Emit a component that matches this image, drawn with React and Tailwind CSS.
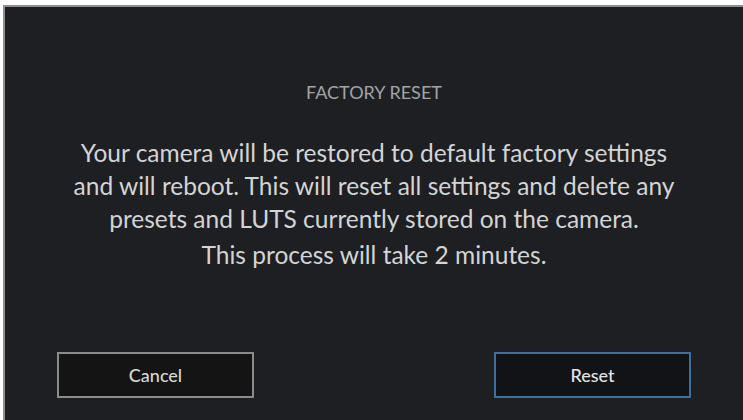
/**
 * Factory reset confirmation screen (camera menu).
 */

export default function App() {
  return (
    <div className="w-[743px] h-[420px] bg-white pt-[5px] pl-[3px] overflow-hidden"
      style={{ fontFamily: 'Lato, "Open Sans", sans-serif' }}>
      <div className="w-full h-full flex flex-col bg-[#1e1f22] border-t-2 border-l-2 border-[#8e8f91]">

        {/* Title */}
        <div className="pt-[76px] text-center text-[18px] text-[#a3a4a6] leading-[18px]">
          FACTORY RESET
        </div>

        {/* Message */}
        <div className="mt-[35px] text-center text-[24.5px] text-[#d3d4d5] leading-[33px]">
          <p>
            Your camera will be restored to default factory settings<br />
            and will reboot. This will reset all settings and delete any<br />
            presets and LUTS currently stored on the camera.
          </p>
          <p className="mt-[3px]">This process will take 2 minutes.</p>
        </div>

        {/* Buttons */}
        <div className="mt-auto mb-[22px] px-[52px] flex justify-between">
          <button type="button"
            className="w-[197px] h-[46px] bg-[#141415] border-2 border-[#8a8b8d] text-[18px] font-medium text-[#d8d8d8]">
            Cancel
          </button>
          <button type="button"
            className="w-[197px] h-[46px] bg-[#121316] border-2 border-[#3f6f9c] text-[18px] font-medium text-[#e4e4e4]">
            Reset
          </button>
        </div>
      </div>
    </div>
  )
}
